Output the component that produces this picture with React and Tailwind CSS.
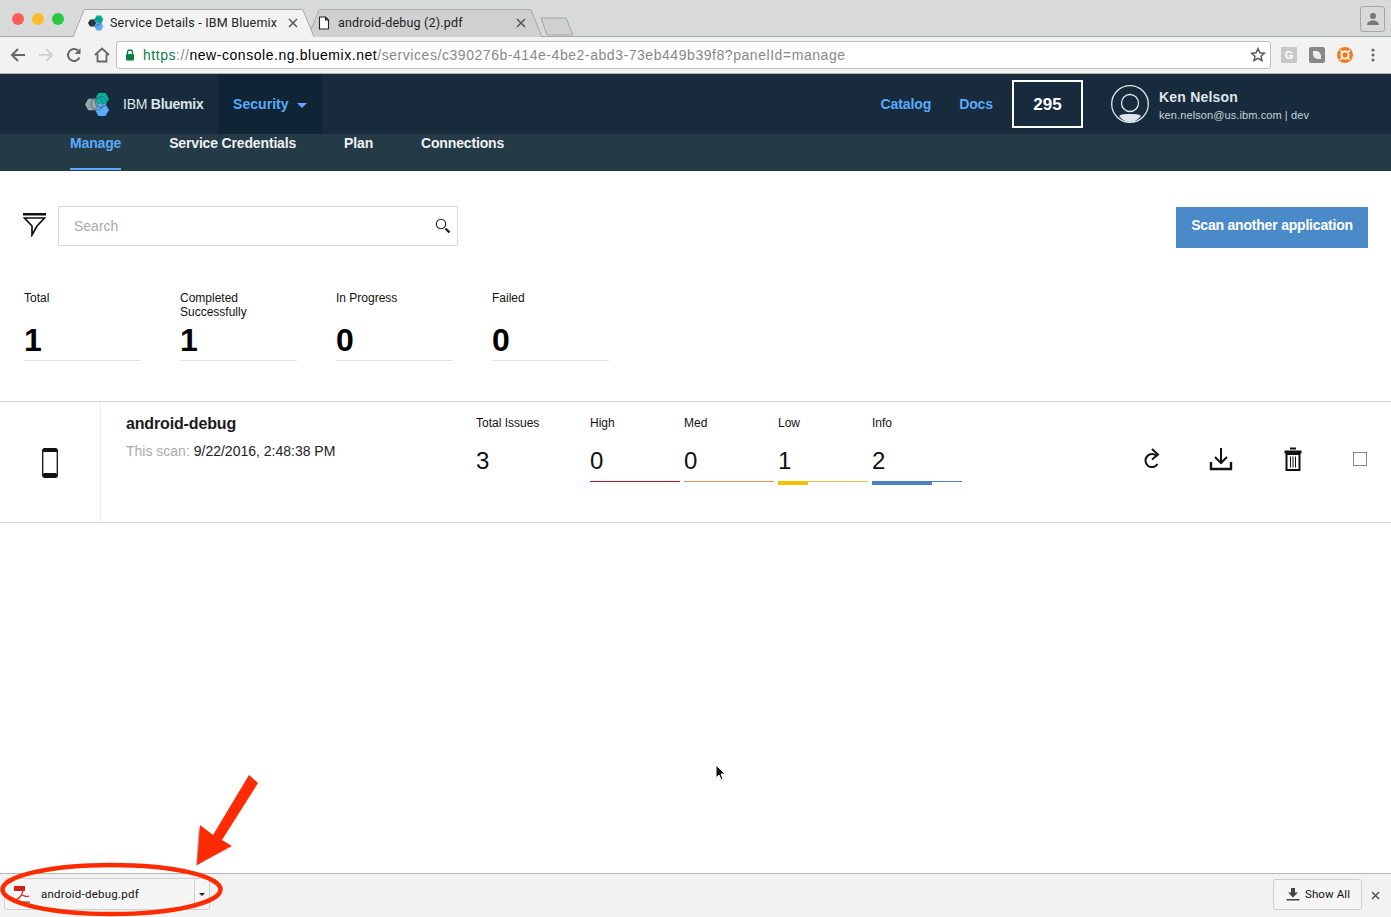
const hex = (cx, cy, r) => {
    const h = r * 0.866
    return `${cx - r},${cy} ${cx - r / 2},${cy - h} ${cx + r / 2},${cy - h} ${cx + r},${cy} ${cx + r / 2},${cy + h} ${cx - r / 2},${cy + h}`
}

function BluemixLogo({ size = 25, left = "#9aa5ab" }) {
    return (
        <svg width={size} height={size} viewBox="0 0 25 25">
            <polygon points={hex(6.5, 12.5, 6.5)} fill={left} />
            <polygon points={hex(17, 7, 7)} fill="#00b4a0" />
            <polygon points={hex(17, 18, 7)} fill="#5aaafa" />
            <circle cx="12" cy="12" r="6" fill="none" stroke="#47606e" strokeWidth="0.8" />
            <circle cx="16" cy="10" r="5.500" fill="none" stroke="#47606e" strokeWidth="0.8" />
        </svg>
    )
}

function ChromeTab({ width, active, title, icon, className, iconWidth, padLeft }) {
    return (
        <div className={`relative h-[28px] flex items-center shrink-0 ${className}`} style={{ width }}>
            <svg className="absolute inset-0" width={width} height="28" viewBox={`0 0 ${width} 28`}>
                <path
                    d={`M0 28 L11 1 Q11.5 0.5 13 0.5 L${width - 13} 0.5 Q${width - 11.5} 0.5 ${width - 11} 1 L${width} 28`}
                    fill={active ? "#f2f2f2" : "#d0d0d0"}
                    stroke="#a9a9a9"
                />
            </svg>
            <div className="relative flex items-center w-full pr-[16px]" style={{ paddingLeft: padLeft }}>
                <span className="shrink-0" style={{ width: iconWidth }}>{icon}</span>
                <span className="text-[12.5px] text-[#222] tracking-[0.2px] whitespace-nowrap font-['Roboto',sans-serif]">{title}</span>
                <span className="ml-auto text-[#555]">
                    <svg width="10" height="10" viewBox="0 0 10 10"><path d="M1 1l8 8M9 1l-8 8" stroke="currentColor" strokeWidth="1.5" /></svg>
                </span>
            </div>
        </div>
    )
}

function TabStrip() {
    return (
        <div className="h-[37px] shrink-0 bg-[#d8d9d9] border-b border-[#a9a9a9] flex items-end relative">
            <div className="flex gap-[8px] items-center absolute left-[12px] top-[13px]">
                <span className="w-[12px] h-[12px] rounded-full bg-[#fc5b57]" />
                <span className="w-[12px] h-[12px] rounded-full bg-[#fdbc2e]" />
                <span className="w-[12px] h-[12px] rounded-full bg-[#28c93f]" />
            </div>
            <div className="flex items-end pl-[73px] -mb-px">
                <ChromeTab
                    width={241}
                    active
                    className="z-10"
                    padLeft={15}
                    iconWidth={22}
                    title="Service Details - IBM Bluemix"
                    icon={<BluemixLogo size={16} left="#1c2f3e" />}
                />
                <ChromeTab
                    width={234}
                    className="-ml-[6px]"
                    padLeft={10}
                    iconWidth={20}
                    title="android-debug (2).pdf"
                    icon={
                        <svg width="12" height="14" viewBox="0 0 12 14">
                            <path d="M1.5 1h6l3 3v9h-9z M7.5 1v3h3" fill="#fff" stroke="#222" strokeWidth="1.1" />
                        </svg>
                    }
                />
                <svg width="34" height="19" viewBox="0 0 34 19" className="-ml-[2px] mb-px">
                    <path d="M1 1 L26 1 L33 18 L7 18 Z" fill="#d0d0d0" stroke="#a5a5a5" />
                </svg>
            </div>
            <div className="ml-auto mr-[6px] mb-[4px] w-[25px] h-[26px] border border-[#a5a5a5] rounded-[3px] flex items-center justify-center">
                <svg width="14" height="14" viewBox="0 0 14 14">
                    <circle cx="7" cy="4" r="3" fill="#777" />
                    <path d="M1 13c0-3 3-4.5 6-4.5s6 1.500 6 4.500z" fill="#777" />
                </svg>
            </div>
        </div>
    )
}

function Toolbar() {
    return (
        <div className="h-[37px] shrink-0 bg-[#f2f2f2] border-b border-[#b5b5b5] flex items-center pl-[10px] pr-[10px]">
            <div className="w-[28px]">
                <svg width="16" height="16" viewBox="0 0 16 16"><path d="M15 8H2M8 2L2 8l6 6" fill="none" stroke="#666" strokeWidth="2" /></svg>
            </div>
            <div className="w-[28px]">
                <svg width="16" height="16" viewBox="0 0 16 16"><path d="M1 8h13M8 2l6 6-6 6" fill="none" stroke="#d2d2d2" strokeWidth="2" /></svg>
            </div>
            <div className="w-[28px]">
                <svg width="16" height="16" viewBox="0 0 16 16"><path d="M13.500 10.500A6 6 0 1 1 12 3.500" fill="none" stroke="#666" strokeWidth="2" /><path d="M14.500 1v6h-6z" fill="#666" /></svg>
            </div>
            <div className="w-[22px]">
                <svg width="16" height="16" viewBox="0 0 16 16"><path d="M1 8l7-6.500L15 8M3.500 7v7.500h9V7" fill="none" stroke="#666" strokeWidth="1.800" /></svg>
            </div>
            <div className="w-[1155px] h-[28px] shrink-0 bg-white border border-[#c0c0c0] rounded-[3px] flex items-center pl-[8px] pr-[4px]">
                <svg width="10" height="12" viewBox="0 0 10 12" className="mr-[8px]">
                    <path d="M2.500 5V3.500a2.500 2.500 0 0 1 5 0V5" fill="none" stroke="#0b8043" strokeWidth="1.300" />
                    <rect x="1" y="5" width="8" height="6.500" rx="1" fill="#0b8043" />
                </svg>
                <span className="text-[14px] tracking-[0.55px] whitespace-nowrap">
                    <span className="text-[#0b8043]">https</span>
                    <span className="text-[#888]">://</span>
                    <span className="text-black">new-console.ng.bluemix.net</span>
                    <span className="text-[#888]">/services/c390276b-414e-4be2-abd3-73eb449b39f8?panelId=manage</span>
                </span>
                <svg width="16" height="16" viewBox="0 0 16 16" className="ml-auto">
                    <path d="M8 1.500l1.900 4.300 4.600.4-3.500 3 1 4.500L8 11.400l-4 2.300 1-4.500-3.500-3 4.600-.4z" fill="none" stroke="#555" strokeWidth="1.400" />
                </svg>
            </div>
            <div className="flex items-center ml-[10px] gap-[12px]">
                <span className="w-[16px] h-[16px] bg-[#c8c8c8] text-white text-[11px] font-bold flex items-center justify-center">G</span>
                <span className="w-[16px] h-[16px] bg-[#888] rounded-[2px] flex items-center justify-center">
                    <span className="w-[8px] h-[8px] bg-[#eee] rounded-tr-[5px] rounded-bl-[5px]" />
                </span>
                <svg width="16" height="16" viewBox="0 0 16 16">
                    <circle cx="8" cy="8" r="8" fill="#f47b20" />
                    <circle cx="8" cy="8" r="3.600" fill="none" stroke="#fff" strokeWidth="1.800" />
                    <path d="M3 3l2.500 2.500M13 3l-2.500 2.500M3 13l2.500-2.500M13 13l-2.500-2.500" stroke="#fff" strokeWidth="1.300" />
                </svg>
                <svg width="4" height="14" viewBox="0 0 4 14" className="ml-[6px]">
                    <circle cx="2" cy="2" r="1.500" fill="#666" />
                    <circle cx="2" cy="7" r="1.500" fill="#666" />
                    <circle cx="2" cy="12" r="1.500" fill="#666" />
                </svg>
            </div>
        </div>
    )
}

function ConsoleHeader() {
    return (
        <div className="h-[60px] shrink-0 bg-[#172b3c] flex items-center">
            <div className="ml-[85px] w-[38px]"><BluemixLogo /></div>
            <span className="text-[14px] tracking-[-0.25px] text-[#dfe6ea] w-[95px] whitespace-nowrap">
                IBM <span className="font-bold">Bluemix</span>
            </span>
            <div className="h-full w-[104px] bg-[#0f2535] flex items-center pl-[15px]">
                <span className="text-[14px] font-bold text-[#5aaafa] tracking-[0.05px]">Security</span>
                <span className="ml-[8px] mt-[2px] border-x-[5px] border-x-transparent border-t-[5px] border-t-[#5aaafa]" />
            </div>
            <a className="ml-auto text-[14px] font-bold text-[#5aaafa] tracking-[-0.1px]">Catalog</a>
            <a className="ml-[28px] text-[14px] font-bold text-[#5aaafa] tracking-[-0.1px]">Docs</a>
            <div className="ml-[19px] w-[71px] h-[48px] border-2 border-white flex items-center justify-center pt-[1px] text-[17px] font-bold text-white">295</div>
            <svg width="38" height="38" viewBox="0 0 38 38" className="ml-[28px]">
                <circle cx="19" cy="19" r="18.300" fill="none" stroke="#dfe6ea" strokeWidth="1.300" />
                <circle cx="19" cy="18" r="8.500" fill="none" stroke="#dfe6ea" strokeWidth="1.300" />
                <path d="M8 31 Q10 29 15 29 L23 29 Q28 29 30 31 Q25 37 19 37 Q13 37 8 31z" fill="#dfe6ea" />
            </svg>
            <div className="ml-[10px] w-[232px] flex flex-col pt-[3px]">
                <span className="text-[14px] font-bold text-[#dfe6ea] leading-[18px] tracking-[0.2px]">Ken Nelson</span>
                <span className="text-[11px] text-[#c9d2d8] leading-[18px] tracking-[0.1px]">ken.nelson@us.ibm.com | dev</span>
            </div>
        </div>
    )
}

function SubNav() {
    const items = [
        { label: "Manage", active: true },
        { label: "Service Credentials" },
        { label: "Plan" },
        { label: "Connections" },
    ]
    return (
        <div className="h-[37px] shrink-0 bg-[#243a47] flex pl-[70px] gap-[48px]">
            {items.map((item) => (
                <div
                    key={item.label}
                    className={`h-[36px] leading-[18px] text-[14px] font-bold tracking-[-0.16px] border-b-2 ${item.active ? "text-[#5aaafa] border-[#5aaafa]" : "text-[#eef2f4] border-transparent"}`}
                >
                    {item.label}
                </div>
            ))}
        </div>
    )
}

function StatCol({ label, value }) {
    return (
        <div className="w-[117px]">
            <div className="h-[28px] text-[12px] leading-[14px] text-[#111]">{label}</div>
            <div className="h-[42px] pt-[3px] text-[32px] leading-[36px] font-bold text-black border-b border-[#e3e3e3]">{value}</div>
        </div>
    )
}

function IssueCol({ label, value, line, bar, barWidth }) {
    return (
        <div className="w-[90px]">
            <div className="text-[12px] leading-[14px] text-[#111] h-[14px]">{label}</div>
            <div className="text-[24px] leading-[28px] text-[#111] mt-[17px] h-[28px]">{value}</div>
            <div className={`mt-[6px] h-px ${line}`} />
            {bar && <div className={`h-[4px] -mt-px ${bar} ${barWidth}`} />}
        </div>
    )
}

function ScanRow() {
    return (
        <div className="h-[122px] shrink-0 border-y border-[#d4d4d4] flex">
            <div className="w-[101px] border-r border-[#eeeeee] flex items-center justify-center pt-[2px]">
                <svg width="16" height="30" viewBox="0 0 16 30">
                    <rect x="0.700" y="0.700" width="14.600" height="28.600" rx="2" fill="none" stroke="#111" strokeWidth="1.300" />
                    <rect x="1" y="1" width="14" height="3" fill="#111" />
                    <rect x="1" y="25" width="14" height="4" rx="1.500" fill="#111" />
                </svg>
            </div>
            <div className="w-[375px] pl-[25px] pt-[12px]">
                <div className="text-[16px] leading-[20px] font-bold text-[#1a1a1a] tracking-[-0.15px]">android-debug</div>
                <div className="text-[14px] leading-[18px] mt-[8px] text-[#aaaaaa]">
                    This scan: <span className="text-[#222]">9/22/2016, 2:48:38 PM</span>
                </div>
            </div>
            <div className="pt-[14px] flex">
                <div className="w-[114px]">
                    <div className="text-[12px] leading-[14px] text-[#111]">Total Issues</div>
                    <div className="text-[24px] leading-[28px] text-[#111] mt-[17px]">3</div>
                </div>
                <div className="flex gap-[4px]">
                    <IssueCol label="High" value="0" line="bg-[#b3122f]" />
                    <IssueCol label="Med" value="0" line="bg-[#ef8a55]" />
                    <IssueCol label="Low" value="1" line="bg-[#eac43c]" bar="bg-[#efc100]" barWidth="w-[30px]" />
                    <IssueCol label="Info" value="2" line="bg-[#4a80c0]" bar="bg-[#4a80c0]" barWidth="w-[60px]" />
                </div>
            </div>
            <div className="ml-auto flex items-center pr-[24px] pb-[6px]">
                <svg width="20" height="24" viewBox="0 0 20 24" className="mr-[47px]">
                    <path d="M15 9.500 A6.500 6.500 0 1 0 15.500 17" fill="none" stroke="#111" strokeWidth="2" />
                    <path d="M10 2l6 5.500-6 5" fill="none" stroke="#111" strokeWidth="2" />
                </svg>
                <svg width="24" height="24" viewBox="0 0 24 24" className="mr-[51px]">
                    <path d="M12 1v15M6 10l6 6 6-6" fill="none" stroke="#111" strokeWidth="2" />
                    <path d="M2 15v7h20v-7" fill="none" stroke="#111" strokeWidth="2.400" />
                </svg>
                <svg width="18" height="24" viewBox="0 0 18 24" className="mr-[51px]">
                    <rect x="6" y="0.500" width="6" height="2" fill="#111" />
                    <rect x="0.500" y="3.500" width="17" height="3" fill="#111" />
                    <rect x="2.500" y="7" width="13" height="16" fill="none" stroke="#111" strokeWidth="2" />
                    <path d="M6.500 9.500v11M9 9.500v11M11.500 9.500v11" stroke="#111" strokeWidth="1" />
                </svg>
                <span className="w-[14px] h-[14px] border border-[#888]" />
            </div>
        </div>
    )
}

function DownloadBar() {
    return (
        <div className="h-[44px] shrink-0 bg-[#f2f2f2] border-t border-[#b5b5b5] flex items-center pl-[4px] pr-[11px] pb-[3px]">
            <div className="w-[206px] h-[32px] border border-[#cfcfcf] rounded-[3px] bg-[#f5f5f5] flex items-center">
                <svg width="18" height="18" viewBox="0 0 18 18" className="ml-[9px]">
                    <path d="M0 1h12l4 4v12H0z" fill="#fff" />
                    <rect x="0" y="1" width="11" height="5" fill="#d2201c" />
                    <path d="M9 6c-1 4-3 7-7 9M8 10c2 1 5 2 7 1" fill="none" stroke="#d2201c" strokeWidth="1.200" />
                    <path d="M0 17h16" stroke="#333" strokeWidth="1" />
                </svg>
                <span className="ml-[9px] pt-[2px] text-[11.5px] tracking-[0.25px] text-[#111] whitespace-nowrap font-['Roboto',sans-serif]">android-debug.pdf</span>
                <span className="ml-auto w-[15px] h-full border-l border-[#cfcfcf] flex items-center justify-center">
                    <span className="border-x-[3px] border-x-transparent border-t-[3px] border-t-[#222]" />
                </span>
            </div>
            <div className="ml-auto w-[89px] h-[31px] border border-[#cfcfcf] rounded-[3px] bg-[#f5f5f5] flex items-center pl-[12px]">
                <svg width="14" height="14" viewBox="0 0 14 14">
                    <path d="M5 1h4v4.500h3L7 10.500 2 5.500h3z" fill="#444" />
                    <rect x="0.500" y="12" width="13" height="1.500" fill="#444" />
                </svg>
                <span className="ml-[5px] pt-[2px] text-[11.5px] tracking-[0.1px] text-[#111] font-['Roboto',sans-serif]">Show All</span>
            </div>
            <svg width="9" height="9" viewBox="0 0 9 9" className="ml-[9px] mt-[3px]">
                <path d="M1 1l7 7M8 1l-7 7" stroke="#555" strokeWidth="1.500" />
            </svg>
        </div>
    )
}

export default function App() {
    return (
        <div className="relative w-[1391px] h-[917px] overflow-hidden bg-white flex flex-col font-['Liberation_Sans',Arial,sans-serif]">
            <TabStrip />
            <Toolbar />
            <ConsoleHeader />
            <SubNav />

            {/* Filtre + recherche */}
            <div className="h-[120px] shrink-0 flex items-start pt-[35px] pl-[23px] pr-[23px]">
                <svg width="23" height="24" viewBox="0 0 23 24" className="mt-[7px]">
                    <rect x="0" y="0" width="23" height="2.500" fill="#111" />
                    <path d="M1.500 5h20L14 13l-5 9v-9z" fill="none" stroke="#111" strokeWidth="1.700" />
                </svg>
                <div className="ml-[12px] w-[400px] h-[40px] border border-[#dcdcdc] flex items-center pl-[15px] pr-[6px]">
                    <span className="text-[14px] text-[#aaaaaa]">Search</span>
                    <svg width="16" height="16" viewBox="0 0 16 16" className="ml-auto">
                        <circle cx="6" cy="6" r="4.700" fill="none" stroke="#222" strokeWidth="1.100" />
                        <path d="M10.500 10.500l4 4" stroke="#222" strokeWidth="2.400" />
                    </svg>
                </div>
                <button className="ml-auto w-[192px] h-[41px] mt-[1px] pb-[4px] bg-[#4a8ac9] text-white text-[14px] font-bold tracking-[-0.2px]">
                    Scan another application
                </button>
            </div>

            {/* Compteurs */}
            <div className="h-[110px] shrink-0 flex gap-[39px] pl-[24px]">
                <StatCol label="Total" value="1" />
                <StatCol label={<>Completed<br />Successfully</>} value="1" />
                <StatCol label="In Progress" value="0" />
                <StatCol label="Failed" value="0" />
            </div>

            <ScanRow />
            <div className="flex-1" />
            <DownloadBar />

            {/* Annotation rouge + curseur, par-dessus la page */}
            <svg className="absolute left-0 bottom-0" width="270" height="150" viewBox="0 0 270 150">
                <path d="M199 58 L196 99 L204 94 Z" fill="#777" opacity="0.6" />
                <ellipse cx="111.500" cy="122.500" rx="109" ry="24.500" fill="none" stroke="#ff2b00" strokeWidth="4.500" />
                <path d="M249 8 L258 16 L222 73 L232 79 L197 98 L200 58 L213 68 Z" fill="#ff2b00" />
            </svg>
            <svg className="absolute left-[714px] top-[764px]" width="12" height="18" viewBox="0 0 12 18">
                <path d="M2 1v13l3-3 2 5 2-1-2-5h4z" fill="#111" stroke="#fff" strokeWidth="1" />
            </svg>
        </div>
    )
}
